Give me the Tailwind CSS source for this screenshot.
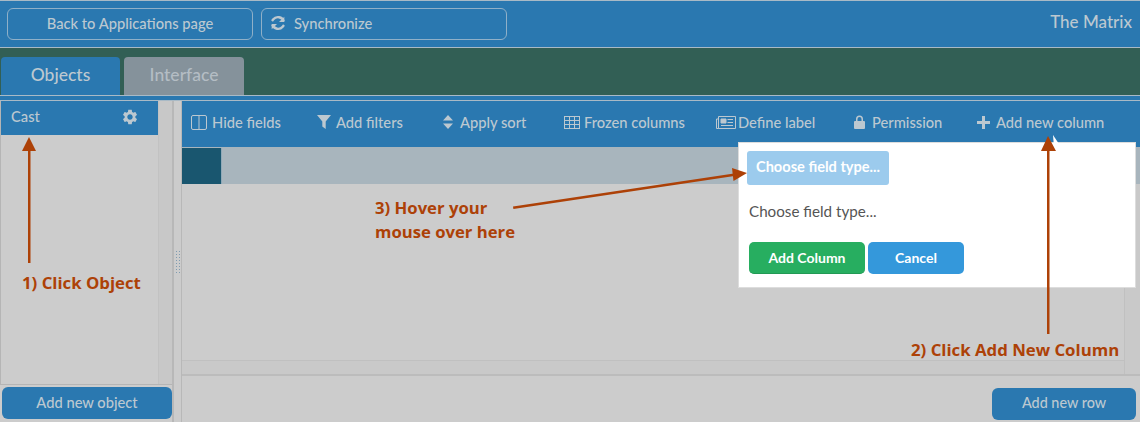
<!DOCTYPE html>
<html lang="en">
<head>
    <meta charset="UTF-8">
    <title>The Matrix</title>
    <script src="https://cdn.jsdelivr.net/npm/@tailwindcss/browser@4"></script>
</head>
<body class="bg-[#cccccc]">
<div class="relative w-[1140px] h-[422px] overflow-hidden bg-[#cccccc] font-['Lato','Liberation_Sans',sans-serif] font-medium text-[14.700px] text-[#bcc8d0]">

    <!-- top bar -->
    <div class="h-[48px] flex items-start bg-[#2a78b0] border-y border-[#a9bac6] pt-[7px] pl-[7px] gap-[8px]">
        <button class="w-[246px] h-[32px] pb-[2px] rounded-[6px] border border-[#8fb0c8] text-center">Back to Applications page</button>
        <button class="w-[246px] h-[32px] pb-[2px] rounded-[6px] border border-[#8fb0c8] flex items-center pl-[8px] gap-[8px]">
            <svg class="w-[16px] h-[16px]" viewBox="0 0 24 24" fill="none" stroke="currentColor" stroke-width="3.6">
                <path d="M20.5 9.5A9 9 0 0 0 5 6.5L3 9"/><path d="M3.5 14.5A9 9 0 0 0 19 17.5L21 15"/>
                <path d="M21.5 2.5v8h-8z" fill="currentColor" stroke="none"/><path d="M2.5 21.5v-8h8z" fill="currentColor" stroke="none"/>
            </svg>
            Synchronize
        </button>
        <div class="ml-auto pr-[8px] pt-[1px] text-[17px]">The Matrix</div>
    </div>

    <!-- tabs -->
    <div class="h-[47px] bg-[#325f55] flex items-end pl-[1px] gap-[4px]">
        <div class="w-[119px] h-[38px] pb-[1px] rounded-t-[4px] bg-[#2a78b0] flex items-center justify-center text-[17.500px]">Objects</div>
        <div class="w-[120px] h-[38px] pb-[1px] rounded-t-[4px] bg-[#85929b] flex items-center justify-center text-[17.500px] text-[#b4bdc4]">Interface</div>
    </div>
    <div class="h-[6px] bg-[#2a78b0] border-t border-b border-[#a9bac6]"></div>

    <div class="flex h-[321px]">
        <!-- left panel -->
        <div class="w-[172px] flex flex-col">
            <div class="flex-1 flex border-b border-[#b5b5b5]">
                <div class="w-[158px] border-l border-[#b5b5b5]">
                    <div class="h-[34px] pb-[3px] bg-[#2a78b0] flex items-center justify-between pl-[10px] pr-[19px]">
                        Cast
                        <svg class="w-[18px] h-[18px]" viewBox="0 0 24 24" fill="currentColor"><path d="M19.14 12.94c.04-.3.06-.61.06-.94 0-.32-.02-.64-.07-.94l2.03-1.58c.18-.14.23-.41.12-.61l-1.92-3.32c-.12-.22-.37-.29-.59-.22l-2.39.96c-.5-.38-1.03-.7-1.62-.94l-.36-2.54c-.04-.24-.24-.41-.48-.41h-3.84c-.24 0-.43.17-.47.41l-.36 2.54c-.59.24-1.13.57-1.62.94l-2.39-.96c-.22-.08-.47 0-.59.22L2.74 8.87c-.12.21-.08.47.12.61l2.03 1.58c-.05.3-.09.63-.09.94s.02.64.07.94l-2.03 1.58c-.18.14-.23.41-.12.61l1.92 3.32c.12.22.37.29.59.22l2.39-.96c.5.38 1.03.7 1.62.94l.36 2.54c.05.24.24.41.48.41h3.84c.24 0 .44-.17.47-.41l.36-2.54c.59-.24 1.13-.56 1.62-.94l2.39.96c.22.08.47 0 .59-.22l1.92-3.32c.12-.22.07-.47-.12-.61l-2.01-1.58zM12 15.6c-1.98 0-3.6-1.62-3.6-3.6s1.62-3.6 3.6-3.6 3.6 1.62 3.6 3.6-1.62 3.6-3.6 3.6z"/></svg>
                    </div>
                </div>
                <div class="w-[14px] border-l border-[#c2c2c2] bg-[#c8c8c8]"></div>
            </div>
            <div class="h-[37px] pt-[2px] pl-[2px]">
                <button class="w-[170px] h-[32px] pb-[2px] rounded-[6px] bg-[#2a78b0]">Add new object</button>
            </div>
        </div>

        <!-- splitter -->
        <div class="w-[10px] border-l-2 border-r border-[#b8b8b8] bg-[#cccccc] flex items-center justify-center">
            <div class="w-[6px] h-[24px] bg-[radial-gradient(#7f9bb0_1px,transparent_1px)] bg-[length:3px_3px]"></div>
        </div>

        <!-- right panel -->
        <div class="flex-1 flex flex-col">
            <div class="h-[46px] pb-[3px] bg-[#2a78b0] flex items-center pl-[9px]">
                <div class="w-[126px] flex items-center gap-[5px]">
                    <svg class="w-[16px] h-[15px]" viewBox="0 0 16 15" fill="none" stroke="currentColor"><rect x=".5" y=".5" width="15" height="14" rx="1.5"/><path d="M8 .5v14"/></svg>
                    Hide fields
                </div>
                <div class="w-[126px] flex items-center gap-[5px]">
                    <svg class="w-[14px] h-[14px]" viewBox="0 0 14 14" fill="currentColor"><path d="M0 0h14L8.7 6.5V14L5.3 11.5v-5z"/></svg>
                    Add filters
                </div>
                <div class="w-[121px] flex items-center gap-[7px]">
                    <svg class="w-[10px] h-[14px]" viewBox="0 0 10 14" fill="currentColor"><path d="M5 0l5 5.5H0zM5 14L0 8.5h10z"/></svg>
                    Apply sort
                </div>
                <div class="w-[152px] flex items-center gap-[4px]">
                    <svg class="w-[16px] h-[13px]" viewBox="0 0 16 13" fill="none" stroke="currentColor"><rect x=".5" y=".5" width="15" height="12"/><path d="M.5 4.5h15M.5 8.500h15M5.500 .5v12M10.500 .5v12"/></svg>
                    Frozen columns
                </div>
                <div class="w-[138px] flex items-center gap-[2px]">
                    <svg class="w-[20px] h-[13px]" viewBox="0 0 20 13" fill="none" stroke="currentColor"><path d="M2.500 .5h17v12h-17zM2.500 2v10.500H.5V3h2"/><path d="M5 3h5v4H5z" fill="currentColor"/><path d="M11.500 3.500H17M11.500 6.500H17M5 9.500h12"/></svg>
                    Define label
                </div>
                <div class="w-[123px] flex items-center gap-[7px]">
                    <svg class="w-[11px] h-[14px]" viewBox="0 0 11 14" fill="currentColor"><path d="M1 6h1V4a3.500 3.500 0 0 1 7 0v2h1a1 1 0 0 1 1 1v6a1 1 0 0 1-1 1H1a1 1 0 0 1-1-1V7a1 1 0 0 1 1-1zm2.500 0h4V4a2 2 0 0 0-4 0z"/></svg>
                    Permission
                </div>
                <div class="flex items-center gap-[6px]">
                    <svg class="w-[13px] h-[13px]" viewBox="0 0 13 13" fill="currentColor"><path d="M5 0h3v5h5v3H8v5H5V8H0V5h5z"/></svg>
                    Add new column
                </div>
            </div>
            <div class="h-[37px] bg-[#a8b5bd]">
                <div class="w-[40px] h-[36px] mt-[1px] bg-[#19566f] border-r border-[#8fa9b8]"></div>
            </div>
            <!-- grid body with its scrollbars -->
            <div class="h-[192px] flex border-b-2 border-[#bcbcbc]">
                <div class="flex-1 flex flex-col justify-end">
                    <div class="h-[14px] border-t border-[#c0c0c0] bg-[#c9c9c9]"></div>
                </div>
                <div class="w-[16px] border-l border-[#c0c0c0] bg-[#c9c9c9]"></div>
            </div>
            <div class="flex-1 flex justify-end items-start pt-[12px] pr-[4px]">
                <button class="w-[144px] h-[32px] pb-[2px] rounded-[6px] bg-[#2a78b0] text-[14.400px]">Add new row</button>
            </div>
        </div>
    </div>

    <!-- popover over the toolbar -->
    <div class="absolute left-[738px] top-[142px] w-[398px] h-[146px] bg-white border border-[#dddddd] pl-[10px] pt-[8px] text-[#555555] font-normal">
        <div class="-ml-[2px] w-[142px] h-[34px] pb-[2px] rounded-[3px] bg-[#9ccbed] text-white font-bold text-[14.600px] flex items-center justify-center">Choose field type...</div>
        <div class="mt-[16px] h-[20px] leading-[20px] text-[15.200px]">Choose field type...</div>
        <div class="mt-[21px] flex gap-[3px] text-white font-bold text-[14px]">
            <div class="w-[116px] h-[32px] pb-[1px] rounded-[5px] bg-[#27ae60] border-b border-[#229954] flex items-center justify-center">Add Column</div>
            <div class="w-[96px] h-[32px] pb-[1px] rounded-[5px] bg-[#3498db] flex items-center justify-center">Cancel</div>
        </div>
    </div>

    <!-- annotations drawn on top of the page -->
    <svg class="absolute left-0 top-0 w-[1140px] h-[422px]" viewBox="0 0 1140 422" fill="#ad4107" stroke="none">
        <path d="M1053 135l8 12h-7z" fill="#ffffff"/>
        <path d="M29 137l7 14H22z"/><rect x="28" y="150" width="2.500" height="113"/>
        <path d="M1048 136l8 15h-15z"/><rect x="1047" y="150" width="2.500" height="184"/>
        <path d="M747 173l-15-5 1.500 13z"/><path d="M513 206.500l221-33 .4 2.400-221 33z"/>
    </svg>
    <div class="absolute left-[22px] top-[272px] font-['Open_Sans',sans-serif] font-bold text-[16.800px] leading-[21px] text-[#ad4107]">1) Click Object</div>
    <div class="absolute left-[911px] top-[339px] font-['Open_Sans',sans-serif] font-bold text-[16.800px] leading-[21px] text-[#ad4107]">2) Click Add New Column</div>
    <div class="absolute left-[375px] top-[196px] font-['Open_Sans',sans-serif] font-bold text-[16.700px] leading-[24px] text-[#ad4107]">3) Hover your<br>mouse over here</div>
</div>
</body>
</html>
